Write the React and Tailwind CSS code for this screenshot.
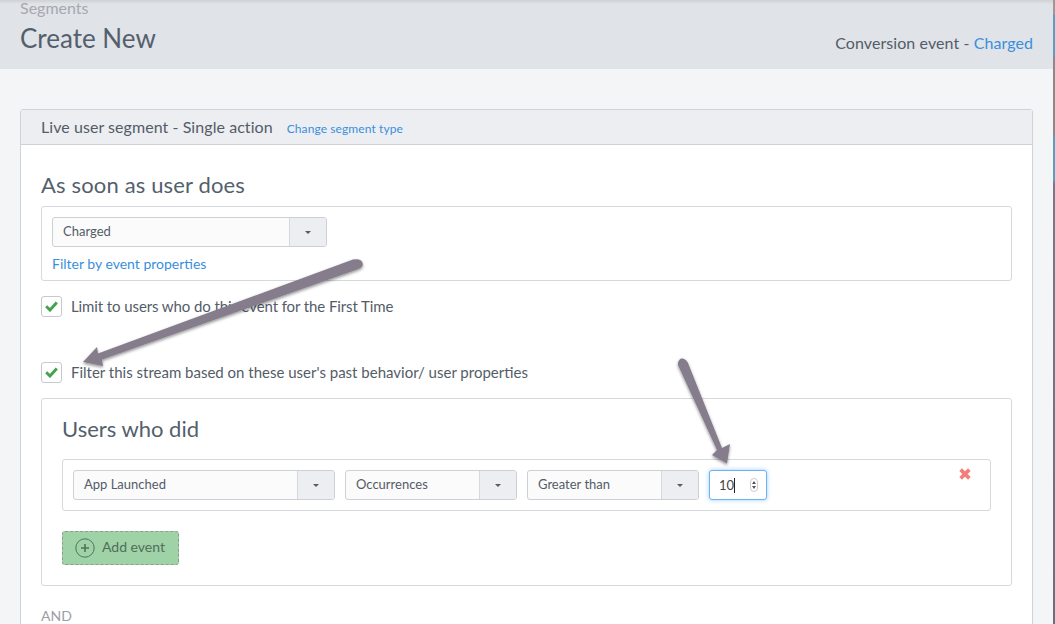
function Caret() {
  return <span className="block w-0 h-0 border-x-[3px] border-x-transparent border-t-[3px] border-t-[#555b66]" />;
}
function Select({ label, w }) {
  return (
    <div className={`flex h-[30px] ${w} border border-[#cdd0d5] rounded-[3px] bg-[#fbfbfb] overflow-hidden shrink-0`}>
      <div className="flex-1 pl-[10px] text-[13px] leading-[27px] text-[#545c68]">{label}</div>
      <div className="w-[37px] border-l border-[#d5d8dc] bg-[#eceef2] flex items-center justify-center">
        <Caret />
      </div>
    </div>
  );
}
function Check({ label, tight }) {
  return (
    <div className="flex items-center h-[21px]">
      <div className="w-[21px] h-[21px] border border-[#c6c9ce] rounded-[3px] bg-white flex items-center justify-center shrink-0">
        <svg width="13" height="11" viewBox="0 0 13 11"><path d="M1.2 5.2 L5 9 L11.8 1.5" fill="none" stroke="#43a24b" strokeWidth="2.9" /></svg>
      </div>
      <span className={`ml-[9px] text-[15px] text-[#545c68] whitespace-nowrap ${tight ? "tracking-[-0.1px]" : ""}`}>{label}</span>
    </div>
  );
}
export default function App() {
  return (
    <div className="relative w-[1055px] h-[624px] overflow-hidden bg-[#f4f5f7] font-['Lato','Open_Sans',sans-serif]">
      <div className="h-[69px] bg-[#e0e3e7] px-5 flex justify-between relative">
        <div className="absolute left-0 right-0 top-0 h-[4px] bg-gradient-to-b from-[#cfd1d4] to-[#e0e3e7]"></div>
        <div className="relative">
          <div className="text-[16px] leading-[15px] text-[#a5a9af]">Segments</div>
          <div className="mt-[8px] text-[26px] leading-[30px] text-[#545f6c]">Create New</div>
        </div>
        <div className="mt-[34px] text-[16px] leading-[18px] tracking-[0.08px] text-[#545c68] pr-[2px]">Conversion event - <span className="text-[#3a8fdd]">Charged</span></div>
      </div>
      <div className="mt-[40px] ml-5 w-[1013px] h-[600px] border border-[#cfd2d6] rounded-[3px] bg-white">
        <div className="h-[35px] bg-[#eceef1] border-b border-[#cfd2d6] pl-5 flex items-center">
          <span className="text-[16px] tracking-[0.06px] text-[#545c68]">Live user segment - Single action</span>
          <span className="ml-[14px] mt-[3px] text-[12px] tracking-[0.1px] text-[#3a8fdd]">Change segment type</span>
        </div>
        <div className="px-5">
          <div className="mt-[28px] text-[22px] leading-[24px] tracking-[0.15px] text-[#545f6c]">As soon as user does</div>
          <div className="mt-[9px] h-[75px] border border-[#d5d8dc] rounded-[3px] px-[10px] pt-[10px]">
            <Select label="Charged" w="w-[275px]" />
            <div className="mt-[9px] text-[14px] leading-[16px] text-[#3a8fdd]">Filter by event properties</div>
          </div>
          <div className="mt-[15px]"><Check tight label="Limit to users who do this event for the First Time" /></div>
          <div className="mt-[45px]"><Check label="Filter this stream based on these user's past behavior/ user properties" /></div>
          <div className="mt-[15px] h-[188px] border border-[#d5d8dc] rounded-[3px] px-5 relative">
            <div className="mt-[16px] text-[22px] leading-[28px] text-[#545f6c]">Users who did</div>
            <div className="mt-[16px] h-[52px] border border-[#d5d8dc] rounded-[3px] pl-[10px] pt-[10px] flex gap-[10px] relative">
              <Select label="App Launched" w="w-[262px]" />
              <Select label="Occurrences" w="w-[172px]" />
              <Select label="Greater than" w="w-[172px]" />
              <div className="w-[58px] h-[30px] border border-[#6db3f2] rounded-[3px] bg-white shadow-[0_0_4px_rgba(90,170,240,0.6)] flex items-center pl-[9px] relative">
                <span className="text-[13px] text-[#444] leading-[16px]">10</span>
                <span className="w-px h-[15px] bg-[#222]"></span>
                <span className="ml-[15px] w-[8px] h-[14px] border border-[#c9ccd0] rounded-[4px] flex flex-col items-center justify-center gap-[2px]">
                  <span className="block w-0 h-0 border-x-[2px] border-x-transparent border-b-[3px] border-b-[#555]"></span>
                  <span className="block w-0 h-0 border-x-[2px] border-x-transparent border-t-[3px] border-t-[#555]"></span>
                </span>
              </div>
              <svg className="absolute top-[8px] right-[19px]" width="12" height="12" viewBox="0 0 11 11"><path d="M1.5 1.5 L9.5 9.5 M9.5 1.5 L1.5 9.5" stroke="#f57f78" strokeWidth="3.4" /></svg>
            </div>
            <div className="mt-[20px] w-[117px] h-[34px] bg-[#a0d2a8] border border-dashed border-[#8a9f8d] rounded-[3px] flex items-center pl-[12px]">
              <svg width="20" height="20" viewBox="0 0 20 20"><circle cx="10" cy="10" r="9.2" fill="none" stroke="#4f7458" strokeWidth="1" /><path d="M10 6 V14 M6 10 H14" stroke="#4f7458" strokeWidth="1.6" /></svg>
              <span className="ml-[7px] -mt-[3px] text-[14px] text-[#4f6f57]">Add event</span>
            </div>
          </div>
          <div className="mt-[22px] text-[14px] leading-[16px] text-[#9a9ea5]">AND</div>
        </div>
      </div>
      <div className="absolute right-0 top-0 w-[2px] h-full bg-[linear-gradient(to_bottom,#9a9a9a_0,#9a9a9a_14px,#5b9ec0_15px,#5b9ec0_56px,#8a8a8c_58px,#8a8a8c_134px,#5b9ec0_136px,#5b9ec0_180px,#77798a_184px,#6b6e7e_100%)]"></div>
      <svg className="absolute inset-0 pointer-events-none" width="1055" height="624" viewBox="0 0 1055 624">
        <defs>
          <filter id="sh" x="-20%" y="-20%" width="140%" height="140%"><feDropShadow dx="0" dy="1.5" stdDeviation="1.5" floodColor="#000" floodOpacity="0.45" /></filter>
        </defs>
        <g filter="url(#sh)" fill="#857b8c">
          <path d="M353 259.5 Q358 258.5 361 260.5 Q363.5 263 362.5 266 Q361 268.5 357 269.5 L102 359.5 L103 366 L83 362 L97 347 L98 353.5 Z" />
          <path d="M678 365 Q677.5 360.5 681 358.5 Q685.5 358 688 363 L722 448 L730 444 L727 463.5 L712 455 L717 450 Z" />
        </g>
      </svg>
    </div>
  );
}
